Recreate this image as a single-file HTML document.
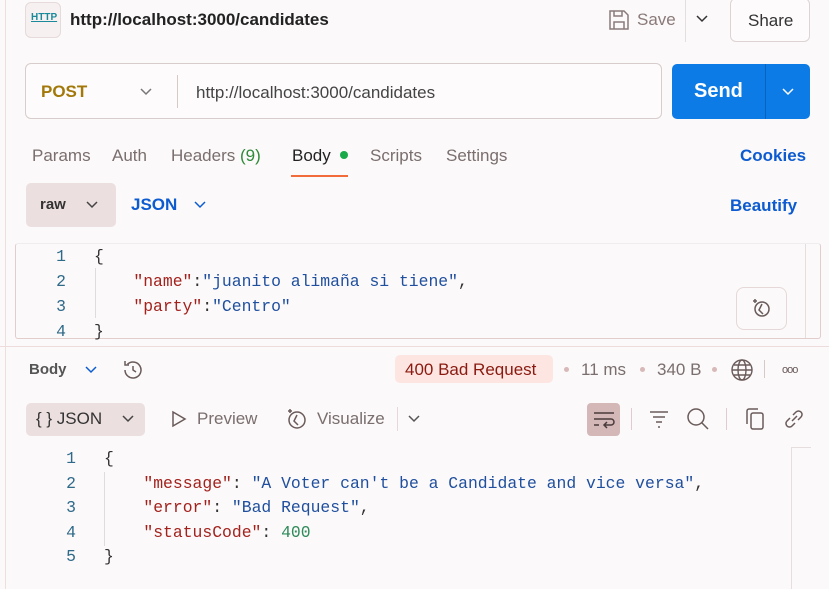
<!DOCTYPE html>
<html><head><meta charset="utf-8"><style>
*{margin:0;padding:0;box-sizing:border-box}
body{width:829px;height:589px;overflow:hidden;background:#fbf9f9;font-family:"Liberation Sans",sans-serif;position:relative;color:#333}
.a{position:absolute;white-space:nowrap}
.mono{font-family:"Liberation Mono",monospace;font-size:16.4px}
.k{color:#a3221d}.s{color:#1f4f9e}.p{color:#333}.n{color:#2f8a5a}.ln{color:#2f6a8a}
.c{display:inline-block;margin-left:28px;white-space:pre}
svg{position:absolute}
</style></head><body>
<div class="a" style="left:5px;top:0;width:1px;height:589px;background:#efdede"></div>
<!-- top bar -->
<div class="a" style="left:25px;top:2px;width:36px;height:36px;border:1px solid #e6dada;border-radius:6px;background:#f6f0f0"></div>
<div class="a" style="left:31px;top:12px;font-size:10px;font-weight:bold;color:#1a8a9a;text-decoration:underline">HTTP</div>
<div class="a" style="left:70px;top:10px;font-size:17px;font-weight:bold;color:#222">http://localhost:3000/candidates</div>
<svg style="left:608px;top:9px" width="22" height="22" viewBox="0 0 22 22" fill="none" stroke="#8a7a7a" stroke-width="1.5"><path d="M2 2h14l4 4v14H2z"/><path d="M6 2v5h8V2M6 20v-7h10v7"/></svg>
<div class="a" style="left:637px;top:10px;font-size:17px;color:#8a7a7a">Save</div>
<div class="a" style="left:685px;top:0;width:1px;height:42px;background:#e6dede"></div>
<svg style="left:696px;top:15px" width="12" height="8" viewBox="0 0 12 8" fill="none" stroke="#333" stroke-width="1.5"><path d="M1 1l5 5 5-5"/></svg>
<div class="a" style="left:730px;top:-2px;width:80px;height:44px;border:1px solid #ddd3d3;border-radius:6px;background:#fdfbfb"></div>
<div class="a" style="left:748px;top:11px;font-size:17px;color:#333">Share</div>
<!-- url bar -->
<div class="a" style="left:25px;top:63px;width:637px;height:56px;border:1px solid #d8cccc;border-radius:6px;background:#fdfbfb"></div>
<div class="a" style="left:41px;top:82px;font-size:17px;font-weight:bold;color:#a3780a">POST</div>
<svg style="left:140px;top:88px" width="12" height="8" viewBox="0 0 12 8" fill="none" stroke="#777" stroke-width="1.5"><path d="M1 1l5 5 5-5"/></svg>
<div class="a" style="left:177px;top:75px;width:1px;height:33px;background:#d8c8c8"></div>
<div class="a" style="left:196px;top:83px;font-size:17px;color:#444">http://localhost:3000/candidates</div>
<div class="a" style="left:672px;top:64px;width:138px;height:55px;background:#0c7be6;border-radius:5px"></div>
<div class="a" style="left:765px;top:64px;width:1px;height:55px;background:#0a62c0"></div>
<div class="a" style="left:694px;top:80px;font-size:20px;font-weight:bold;color:#fff">Send</div>
<svg style="left:782px;top:88px" width="12" height="8" viewBox="0 0 12 8" fill="none" stroke="#fff" stroke-width="1.5"><path d="M1 1l5 5 5-5"/></svg>
<!-- tabs -->
<div class="a" style="left:32px;top:146px;font-size:17px;color:#7a6e6e">Params</div>
<div class="a" style="left:112px;top:146px;font-size:17px;color:#7a6e6e">Auth</div>
<div class="a" style="left:171px;top:146px;font-size:17px;color:#7a6e6e">Headers <span style="color:#2f8a3a">(9)</span></div>
<div class="a" style="left:292px;top:146px;font-size:17px;color:#222">Body</div>
<div class="a" style="left:340px;top:151px;width:8px;height:8px;border-radius:50%;background:#1aaa4a"></div>
<div class="a" style="left:291px;top:175px;width:57px;height:2px;background:#f26b3a"></div>
<div class="a" style="left:370px;top:146px;font-size:17px;color:#7a6e6e">Scripts</div>
<div class="a" style="left:446px;top:146px;font-size:17px;color:#7a6e6e">Settings</div>
<div class="a" style="left:740px;top:146px;font-size:17px;font-weight:bold;color:#0c5bd0">Cookies</div>
<div class="a" style="left:26px;top:183px;width:90px;height:44px;background:#ecdfdf;border-radius:5px"></div>
<div class="a" style="left:40px;top:196px;font-size:15px;font-weight:bold;color:#333">raw</div>
<svg style="left:86px;top:201px" width="12" height="8" viewBox="0 0 12 8" fill="none" stroke="#444" stroke-width="1.5"><path d="M1 1l5 5 5-5"/></svg>
<div class="a" style="left:131px;top:195px;font-size:17px;font-weight:bold;color:#0c5bd0">JSON</div>
<svg style="left:194px;top:201px" width="12" height="8" viewBox="0 0 12 8" fill="none" stroke="#0c5bd0" stroke-width="1.5"><path d="M1 1l5 5 5-5"/></svg>
<div class="a" style="left:730px;top:196px;font-size:17px;font-weight:bold;color:#0c5bd0">Beautify</div>
<!-- request editor -->
<div class="a" style="left:15px;top:243px;width:806px;height:96px;border:1px solid #e2cccc;border-top-color:#eee;border-radius:3px"></div>
<div class="a" style="left:805px;top:244px;width:1px;height:94px;background:#e6dede"></div>
<div class="a mono" style="left:0;top:244px;line-height:25px">
<div><span class="ln" style="display:inline-block;width:66px;text-align:right">1</span><span class="c"><span class="p">{</span></span></div>
<div><span class="ln" style="display:inline-block;width:66px;text-align:right">2</span><span class="c">    <span class="k">"name"</span>:<span class="s">"juanito alimaña si tiene"</span>,</span></div>
<div><span class="ln" style="display:inline-block;width:66px;text-align:right">3</span><span class="c">    <span class="k">"party"</span>:<span class="s">"Centro"</span></span></div>
<div><span class="ln" style="display:inline-block;width:66px;text-align:right">4</span><span class="c"><span class="p">}</span></span></div>
</div>
<div class="a" style="left:95px;top:268px;width:1px;height:50px;background:#ddd"></div>
<div class="a" style="left:736px;top:287px;width:51px;height:43px;border:1px solid #e6d8d8;border-radius:8px;background:#fbf9f9"></div>
<svg style="left:750px;top:297px" width="22" height="22" viewBox="0 0 22 22" fill="none" stroke="#6a5a5a" stroke-width="1.5"><circle cx="12" cy="12" r="7"/><path d="M12 7l-3 6 4 4"/><path d="M5 2v4M3 4h4"/></svg>
<!-- response -->
<div class="a" style="left:0;top:346px;width:829px;height:1px;background:#eedcdc"></div>
<div class="a" style="left:29px;top:361px;font-size:15px;font-weight:bold;color:#555">Body</div>
<svg style="left:85px;top:366px" width="12" height="8" viewBox="0 0 12 8" fill="none" stroke="#0c5bd0" stroke-width="1.5"><path d="M1 1l5 5 5-5"/></svg>
<svg style="left:121px;top:358px" width="24" height="24" viewBox="0 0 24 24" fill="none" stroke="#6a5a5a" stroke-width="1.5"><path d="M4 12a8 8 0 1 0 2.5-5.8"/><path d="M4 3v4h4"/><path d="M12 8v4l3 2"/></svg>
<div class="a" style="left:395px;top:355px;width:158px;height:28px;background:#fde6e2;border-radius:5px"></div>
<div class="a" style="left:405px;top:360px;font-size:17px;color:#8a1a10">400 Bad Request</div>
<div class="a" style="left:564px;top:367px;width:5px;height:5px;border-radius:50%;background:#d8b8b8"></div>
<div class="a" style="left:581px;top:360px;font-size:17px;color:#7a6e6e">11 ms</div>
<div class="a" style="left:640px;top:367px;width:5px;height:5px;border-radius:50%;background:#d8b8b8"></div>
<div class="a" style="left:657px;top:360px;font-size:17px;color:#7a6e6e">340 B</div>
<div class="a" style="left:712px;top:367px;width:5px;height:5px;border-radius:50%;background:#d8b8b8"></div>
<svg style="left:730px;top:358px" width="24" height="24" viewBox="0 0 24 24" fill="none" stroke="#6a5a5a" stroke-width="1.4"><circle cx="12" cy="12" r="10"/><ellipse cx="12" cy="12" rx="4" ry="10"/><path d="M2 12h20M4 7h16M4 17h16"/></svg>
<div class="a" style="left:764px;top:360px;width:1px;height:18px;background:#d8c8c8"></div>
<div class="a" style="left:782px;top:364px;font-size:11px;color:#6a5a5a;letter-spacing:-1px">ooo</div>
<div class="a" style="left:26px;top:403px;width:119px;height:33px;background:#ecdfdf;border-radius:5px"></div>
<div class="a" style="left:36px;top:409px;font-size:17px;color:#333">{ } JSON</div>
<svg style="left:122px;top:415px" width="12" height="8" viewBox="0 0 12 8" fill="none" stroke="#444" stroke-width="1.5"><path d="M1 1l5 5 5-5"/></svg>
<svg style="left:171px;top:410px" width="16" height="18" viewBox="0 0 16 18" fill="none" stroke="#6a5a5a" stroke-width="1.5"><path d="M2 2l12 7-12 7z"/></svg>
<div class="a" style="left:197px;top:409px;font-size:17px;color:#7a6e6e">Preview</div>
<svg style="left:285px;top:407px" width="24" height="24" viewBox="0 0 24 24" fill="none" stroke="#6a5a5a" stroke-width="1.5"><circle cx="12" cy="13" r="8"/><path d="M12 8l-3 6 4 4"/><path d="M5 2v4M3 4h4"/></svg>
<div class="a" style="left:317px;top:409px;font-size:17px;color:#7a6e6e">Visualize</div>
<div class="a" style="left:397px;top:407px;width:1px;height:24px;background:#e6d8d8"></div>
<svg style="left:408px;top:415px" width="12" height="8" viewBox="0 0 12 8" fill="none" stroke="#555" stroke-width="1.5"><path d="M1 1l5 5 5-5"/></svg>
<div class="a" style="left:587px;top:403px;width:33px;height:33px;background:#d4b8b8;border-radius:4px"></div>
<svg style="left:592px;top:409px" width="24" height="22" viewBox="0 0 24 22" fill="none" stroke="#4a3a3a" stroke-width="1.5"><path d="M2 4h20M2 10h17a3 3 0 0 1 0 6h-6M15 13l-3 3 3 3M2 16h5"/></svg>
<div class="a" style="left:631px;top:408px;width:1px;height:22px;background:#e0cccc"></div>
<svg style="left:648px;top:408px" width="22" height="22" viewBox="0 0 22 22" fill="none" stroke="#6a5a5a" stroke-width="1.5"><path d="M2 4h18M5 9h12M8 14h6M10 19h2"/></svg>
<svg style="left:686px;top:407px" width="24" height="24" viewBox="0 0 24 24" fill="none" stroke="#6a5a5a" stroke-width="1.5"><circle cx="10" cy="10" r="8"/><path d="M16 16l6 6"/></svg>
<div class="a" style="left:726px;top:408px;width:1px;height:22px;background:#e0cccc"></div>
<svg style="left:744px;top:407px" width="22" height="24" viewBox="0 0 22 24" fill="none" stroke="#6a5a5a" stroke-width="1.5"><rect x="7" y="6" width="12" height="16" rx="2"/><path d="M3 17V4a2 2 0 0 1 2-2h9"/></svg>
<svg style="left:782px;top:407px" width="24" height="24" viewBox="0 0 24 24" fill="none" stroke="#6a5a5a" stroke-width="1.5"><path d="M10 14l5-5M8 11l-3 3a3.5 3.5 0 0 0 5 5l3-3M16 13l3-3a3.5 3.5 0 0 0-5-5l-3 3"/></svg>
<div class="a" style="left:791px;top:447px;width:1px;height:142px;background:#e6dede"></div>
<div class="a" style="left:791px;top:447px;width:20px;height:1px;background:#e6dede"></div>
<div class="a mono" style="left:0;top:447px;line-height:24.6px">
<div><span class="ln" style="display:inline-block;width:76px;text-align:right">1</span><span class="c"><span class="p">{</span></span></div>
<div><span class="ln" style="display:inline-block;width:76px;text-align:right">2</span><span class="c">    <span class="k">"message"</span>: <span class="s">"A Voter can't be a Candidate and vice versa"</span>,</span></div>
<div><span class="ln" style="display:inline-block;width:76px;text-align:right">3</span><span class="c">    <span class="k">"error"</span>: <span class="s">"Bad Request"</span>,</span></div>
<div><span class="ln" style="display:inline-block;width:76px;text-align:right">4</span><span class="c">    <span class="k">"statusCode"</span>: <span class="n">400</span></span></div>
<div><span class="ln" style="display:inline-block;width:76px;text-align:right">5</span><span class="c"><span class="p">}</span></span></div>
</div>
<div class="a" style="left:104px;top:472px;width:1px;height:74px;background:#ddd"></div>
</body></html>
